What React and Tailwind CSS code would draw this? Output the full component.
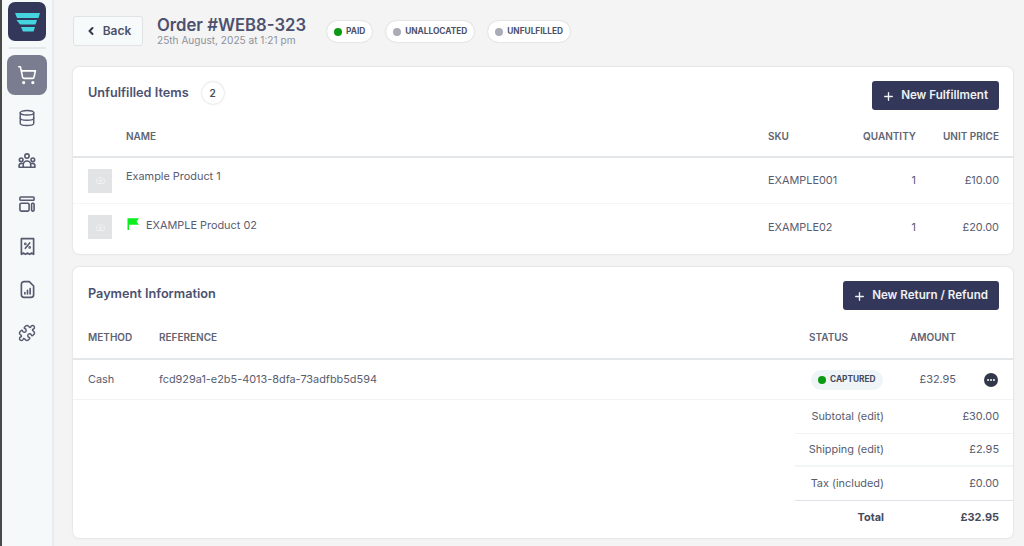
import { Camera, ChevronLeft, Database, Ellipsis, Plus, Puzzle, ShoppingCart } from "lucide-react";

function Logo() {
  return (
    <svg viewBox="0 0 38 39" className="h-[39px] w-[38px]">
      <rect width="38" height="39" rx="7" fill="#33385a" />
      <path d="M7 11H32L30.5 16H9Z" fill="#45d5de" />
      <path d="M8.5 18H29L27.5 22.5H12Z" fill="#45d5de" />
      <path d="M13 25H27L25.5 29.5H15Z" fill="#45d5de" />
    </svg>
  );
}

function IconSvg({ children, size = "h-[21px] w-[21px]" }) {
  return (
    <svg viewBox="0 0 24 24" fill="none" stroke="currentColor" strokeWidth="1.9" strokeLinejoin="round" strokeLinecap="round" className={size}>
      {children}
    </svg>
  );
}

function ReportIcon() {
  return (
    <IconSvg>
      <path d="M5 6a3 3 0 0 1 3-3h6l5 5v10a3 3 0 0 1-3 3H8a3 3 0 0 1-3-3z" />
      <path d="M9 17v-1.5M12 17v-4M15 17v-6" />
    </IconSvg>
  );
}

function DiscountIcon() {
  return (
    <IconSvg>
      <path d="M5 3h14v18l-2.3-1.5L14.3 21 12 19.5 9.7 21l-2.4-1.5L5 21z" />
      <path d="M9.5 14l5-6" />
      <circle cx="9.5" cy="9" r=".6" />
      <circle cx="14.5" cy="13" r=".6" />
    </IconSvg>
  );
}

function TeamIcon() {
  return (
    <IconSvg size="h-[20px] w-[20px]">
      <circle cx="12" cy="6" r="2.6" />
      <circle cx="5" cy="10.5" r="2.2" />
      <circle cx="19" cy="10.5" r="2.2" />
      <path d="M7.5 19.5v-3a4.5 4.5 0 0 1 9 0v3z" />
      <path d="M7.5 19.5H2.5v-2a3 3 0 0 1 3-2.6h2M16.5 19.5h5v-2a3 3 0 0 0-3-2.6h-2" />
    </IconSvg>
  );
}

function LayoutIcon() {
  return (
    <IconSvg size="h-[20px] w-[20px]">
      <rect x="3.5" y="3.5" width="17" height="4" rx="1" />
      <rect x="3.5" y="11" width="11" height="9.5" rx="1.5" />
      <rect x="17.5" y="11" width="3" height="9.5" rx="1.2" />
    </IconSvg>
  );
}

function NavIcon({ children }) {
  return <div className="flex h-[43px] w-10 items-center justify-center text-[#565a6e]">{children}</div>;
}

function Sidebar() {
  return (
    <aside className="flex w-[54px] shrink-0 flex-col items-center border-r-2 border-l-2 border-r-[#e9ecee] border-l-[#4a4a4a] bg-[#f5f9fa] pt-[2px]">
      <Logo />
      <div className="mt-[6px] h-[2px] w-[37px] bg-[#e6e9eb]" />
      <div className="mt-[6px] flex h-10 w-10 items-center justify-center rounded-lg bg-[#7a7d8f] text-white">
        <ShoppingCart size={20} strokeWidth={1.9} />
      </div>
      <div className="mt-[1px] flex flex-col">
        <NavIcon><Database size={18} strokeWidth={1.9} /></NavIcon>
        <NavIcon><TeamIcon /></NavIcon>
        <NavIcon><LayoutIcon /></NavIcon>
        <NavIcon><DiscountIcon /></NavIcon>
        <NavIcon><ReportIcon /></NavIcon>
        <NavIcon><Puzzle size={18} strokeWidth={1.9} /></NavIcon>
      </div>
    </aside>
  );
}

function Pill({ label, dot }) {
  return (
    <span className="flex h-[21px] items-center gap-[4px] rounded-full bg-white px-[7px] text-[8.3px] font-bold text-[#4d5168] shadow-[0_0_2px_rgba(0,0,0,0.2)]">
      <span className={`h-2 w-2 rounded-full ${dot}`} />
      {label}
    </span>
  );
}

function ActionButton({ children }) {
  return (
    <button className="flex h-[29px] items-center gap-[6px] rounded-[3px] bg-[#33385a] pl-[10px] pr-[11px] pt-[1px] text-[11.6px] font-semibold text-[#f0f1f5]">
      <Plus size={13} strokeWidth={2.5} />
      {children}
    </button>
  );
}

function Thumb() {
  return (
    <div className="flex h-6 w-6 items-center justify-center bg-[#e2e3e5] text-[#f2f2f3]">
      <Camera size={9} strokeWidth={2.5} />
    </div>
  );
}

function ItemRow({ name, flag, sku, price, rowClass, nameClass }) {
  return (
    <div className={`grid grid-cols-[38px_1fr_95px_53px_83px] items-center pl-[15px] pr-[14px] text-[10.9px] text-[#585c70] ${rowClass}`}>
      <Thumb />
      <div className={`flex items-center gap-[6px] ${nameClass}`}>
        {flag && (
          <svg viewBox="0 0 14 14" className="mb-[3px] h-[14px] w-[14px]">
            <path d="M1.5 13V1.2H13L10.6 4.4 13 7.8H3V13z" fill="#0ced1f" />
          </svg>
        )}
        {name}
      </div>
      <div>{sku}</div>
      <div className="text-right">1</div>
      <div className="text-right">{price}</div>
    </div>
  );
}

function TotalRow({ label, value, border, bold }) {
  return (
    <div className={`ml-auto grid h-[33.5px] w-[218px] grid-cols-[89px_1fr] items-center pr-[14px] text-[10.9px] ${bold ? "font-bold text-[#45495c]" : "text-[#585c70]"} ${border}`}>
      <div className="whitespace-nowrap text-right">{label}</div>
      <div className="text-right">{value}</div>
    </div>
  );
}

export default function App() {
  return (
    <div className="flex h-[546px] w-[1024px] overflow-hidden bg-[#f4f4f4] font-['Inter',sans-serif]">
      <Sidebar />
      <main className="flex-1 pl-[19px] pr-[11px]">
        <header className="flex h-[67px] items-start pt-[16px]">
          <button className="flex h-[30px] w-[70px] items-center justify-center gap-[6px] rounded-[3px] border border-[#e0e2e4] bg-[#f7fafa] text-[12px] font-semibold text-[#4d5168]">
            <ChevronLeft size={12} strokeWidth={4} className="text-[#33384a]" />
            Back
          </button>
          <div className="ml-[14px]">
            <h1 className="text-[16.7px] leading-[19px] font-semibold text-[#4d5170]">Order #WEB8-323</h1>
            <p className="text-[10.1px] leading-[11px] text-[#8f929c]">25th August, 2025 at 1:21 pm</p>
          </div>
          <div className="ml-[21px] mt-[5px] flex gap-[14px]">
            <Pill label="PAID" dot="bg-[#0a9a14]" />
            <Pill label="UNALLOCATED" dot="bg-[#a9abb6]" />
            <Pill label="UNFULFILLED" dot="bg-[#a9abb6]" />
          </div>
        </header>

        <section className="h-[187px] rounded-md bg-white shadow-[0_0_2px_rgba(0,0,0,0.18)]">
          <div className="flex h-[43px] items-end justify-between pl-[15px] pr-[14px]">
            <div className="flex items-center gap-[13px] pb-[6px]">
              <h2 className="text-[12.7px] font-semibold text-[#4d5170]">Unfulfilled Items</h2>
              <span className="flex h-[22px] w-[22px] items-center justify-center rounded-full bg-white text-[10px] font-semibold text-[#45495c] shadow-[0_0_2px_rgba(0,0,0,0.25)]">2</span>
            </div>
            <ActionButton>New Fulfillment</ActionButton>
          </div>
          <div className="grid h-[48px] grid-cols-[38px_1fr_95px_53px_83px] items-center border-b-2 border-[#e4e7ea] pl-[15px] pr-[14px] pt-[6px] text-[10px] font-semibold text-[#606472]">
            <div />
            <div>NAME</div>
            <div>SKU</div>
            <div className="whitespace-nowrap text-right">QUANTITY</div>
            <div className="text-right">UNIT PRICE</div>
          </div>
          <ItemRow name="Example Product 1" sku="EXAMPLE001" price="£10.00" rowClass="h-[46px] border-b border-[#f3f6f7]" nameClass="mb-[9px]" />
          <ItemRow name="EXAMPLE Product 02" flag sku="EXAMPLE02" price="£20.00" rowClass="h-[50px] pb-[4px]" nameClass="mb-[4px]" />
        </section>

        <section className="mt-[13px] h-[271px] rounded-md bg-white shadow-[0_0_2px_rgba(0,0,0,0.18)]">
          <div className="flex h-[43px] items-end justify-between pl-[15px] pr-[14px]">
            <h2 className="pb-[7px] text-[12.7px] font-semibold text-[#4d5170]">Payment Information</h2>
            <ActionButton>New Return / Refund</ActionButton>
          </div>
          <div className="grid h-[50px] grid-cols-[71px_1fr_101px_46px_57px] items-center border-b-2 border-[#e4e7ea] pl-[15px] pt-[6px] text-[10px] font-semibold text-[#606472]">
            <div>METHOD</div>
            <div>REFERENCE</div>
            <div>STATUS</div>
            <div>AMOUNT</div>
            <div />
          </div>
          <div className="grid h-[40px] grid-cols-[71px_1fr_101px_46px_57px] items-center border-b border-[#f1f4f5] pl-[15px] text-[10.9px] text-[#585c70]">
            <div>Cash</div>
            <div>fcd929a1-e2b5-4013-8dfa-73adfbb5d594</div>
            <div>
              <span className="ml-[2px] inline-flex h-5 items-center gap-[4px] rounded-full bg-[#eff4f6] px-[7px] text-[8.3px] font-bold text-[#45495c]">
                <span className="h-2 w-2 rounded-full bg-[#0a9a14]" />
                CAPTURED
              </span>
            </div>
            <div className="text-right">£32.95</div>
            <div className="flex justify-end pr-[15px]">
              <span className="flex h-[14px] w-[14px] items-center justify-center rounded-full bg-[#33374a] text-white">
                <Ellipsis size={10} strokeWidth={3} />
              </span>
            </div>
          </div>
          <TotalRow label="Subtotal (edit)" value="£30.00" border="border-b border-[#f1f4f5]" />
          <TotalRow label="Shipping (edit)" value="£2.95" border="border-b-2 border-[#f1f5f6]" />
          <TotalRow label="Tax (included)" value="£0.00" border="border-b border-[#dfe2e6]" />
          <TotalRow label="Total" value="£32.95" bold />
        </section>
      </main>
    </div>
  );
}
